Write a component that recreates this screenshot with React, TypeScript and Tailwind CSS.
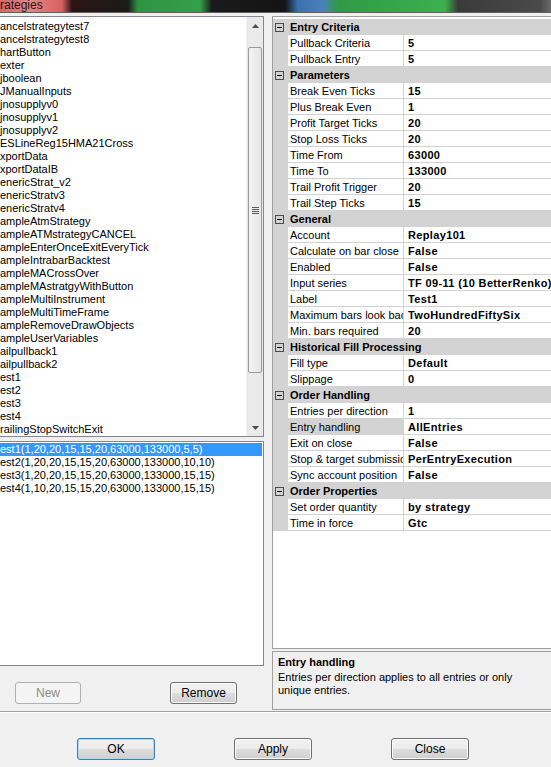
import React from "react";

const strategies = [
  "ancelstrategytest7",
  "ancelstrategytest8",
  "hartButton",
  "exter",
  "jboolean",
  "JManualInputs",
  "jnosupplyv0",
  "jnosupplyv1",
  "jnosupplyv2",
  "ESLineReg15HMA21Cross",
  "xportData",
  "xportDataIB",
  "enericStrat_v2",
  "enericStratv3",
  "enericStratv4",
  "ampleAtmStrategy",
  "ampleATMstrategyCANCEL",
  "ampleEnterOnceExitEveryTick",
  "ampleIntrabarBacktest",
  "ampleMACrossOver",
  "ampleMAstratgyWithButton",
  "ampleMultiInstrument",
  "ampleMultiTimeFrame",
  "ampleRemoveDrawObjects",
  "ampleUserVariables",
  "ailpullback1",
  "ailpullback2",
  "est1",
  "est2",
  "est3",
  "est4",
  "railingStopSwitchExit",
];

const tests = [
  "est1(1,20,20,15,15,20,63000,133000,5,5)",
  "est2(1,20,20,15,15,20,63000,133000,10,10)",
  "est3(1,20,20,15,15,20,63000,133000,15,15)",
  "est4(1,10,20,15,15,20,63000,133000,15,15)",
];

type Row = { cat?: string; name?: string; value?: string; sel?: boolean };

const grid: Row[] = [
  { cat: "Entry Criteria" },
  { name: "Pullback Criteria", value: "5" },
  { name: "Pullback Entry", value: "5" },
  { cat: "Parameters" },
  { name: "Break Even Ticks", value: "15" },
  { name: "Plus Break Even", value: "1" },
  { name: "Profit Target Ticks", value: "20" },
  { name: "Stop Loss Ticks", value: "20" },
  { name: "Time From", value: "63000" },
  { name: "Time To", value: "133000" },
  { name: "Trail Profit Trigger", value: "20" },
  { name: "Trail Step Ticks", value: "15" },
  { cat: "General" },
  { name: "Account", value: "Replay101" },
  { name: "Calculate on bar close", value: "False" },
  { name: "Enabled", value: "False" },
  { name: "Input series", value: "TF 09-11 (10 BetterRenko)" },
  { name: "Label", value: "Test1" },
  { name: "Maximum bars look back", value: "TwoHundredFiftySix" },
  { name: "Min. bars required", value: "20" },
  { cat: "Historical Fill Processing" },
  { name: "Fill type", value: "Default" },
  { name: "Slippage", value: "0" },
  { cat: "Order Handling" },
  { name: "Entries per direction", value: "1" },
  { name: "Entry handling", value: "AllEntries", sel: true },
  { name: "Exit on close", value: "False" },
  { name: "Stop & target submission", value: "PerEntryExecution" },
  { name: "Sync account position", value: "False" },
  { cat: "Order Properties" },
  { name: "Set order quantity", value: "by strategy" },
  { name: "Time in force", value: "Gtc" },
];

function Arrow({ up }: { up?: boolean }) {
  return (
    <svg width="7" height="4" viewBox="0 0 7 4">
      {up ? (
        <polygon points="0,4 7,4 3.5,0" fill="#4d4d4d" />
      ) : (
        <polygon points="0,0 7,0 3.5,4" fill="#4d4d4d" />
      )}
    </svg>
  );
}

function WinButton({
  label,
  disabled,
  primary,
  w,
}: {
  label: string;
  disabled?: boolean;
  primary?: boolean;
  w: string;
}) {
  if (disabled) {
    return (
      <div
        className={`${w} h-[22px] rounded-[3px] border border-[#adb2b5] bg-[#f4f4f4] text-[12px] text-[#8c8c8c] flex items-center justify-center`}
      >
        {label}
      </div>
    );
  }
  return (
    <div
      className={`${w} h-[22px] rounded-[3px] border ${
        primary ? "border-[#3c7fb1] shadow-[inset_0_0_0_1px_#a6dcfa]" : "border-[#707070] shadow-[inset_0_0_0_1px_#fbfbfb]"
      } bg-[linear-gradient(to_bottom,#f2f2f2_0%,#ebebeb_48%,#dddddd_52%,#cfcfcf_100%)] text-[12px] text-black flex items-center justify-center`}
    >
      {label}
    </div>
  );
}

export default function App() {
  return (
    <div className="w-[551px] h-[767px] overflow-hidden bg-[#f0f0f0] font-['Liberation_Sans',Arial,sans-serif] text-black select-none">
      {/* title strip */}
      <div className="h-[12px] bg-[linear-gradient(to_right,#d96464_0px,#e88484_30px,#d86060_62px,#2a1414_72px,#1a1a1a_128px,#2e9444_138px,#34a04a_200px,#1a1a1a_212px,#141414_285px,#3a72b0_298px,#4a80bc_322px,#2f9a46_338px,#3cb04e_445px,#3a3a3a_458px,#4a4a4a_540px,#6a6a6a_551px)] text-[12px] leading-[11px] text-[#1a1a1a] overflow-hidden whitespace-nowrap">
        rategies
      </div>
      <div className="h-[1px] bg-[#5e5e5e]" />

      {/* main area */}
      <div className="h-[698px] pt-[3px] flex">
        {/* left column */}
        <div className="w-[264px] shrink-0 flex flex-col">
          {/* strategies list */}
          <div className="h-[421px] border-t border-r border-b border-[#828790] bg-white flex">
            <div className="flex-1 pt-[3px] overflow-hidden">
              {strategies.map((s, i) => (
                <div key={i} className="h-[13px] text-[11px] leading-[13px] whitespace-nowrap">
                  {s}
                </div>
              ))}
            </div>
            <div className="w-[17px] bg-[#eaeaea] border-l border-[#f3f3f3] flex flex-col">
              <div className="h-[17px] flex items-center justify-center">
                <Arrow up />
              </div>
              <div className="h-[13px]" />
              <div className="h-[326px] mx-[1px] rounded-[2px] border border-[#9a9a9a] bg-[linear-gradient(to_right,#f3f3f3,#e6e6e6)] flex items-center justify-center">
                <div className="flex flex-col gap-[1px]">
                  <div className="w-[7px] h-[1px] bg-[#5a5a5a]" />
                  <div className="w-[7px] h-[1px] bg-[#5a5a5a]" />
                  <div className="w-[7px] h-[1px] bg-[#5a5a5a]" />
                  <div className="w-[7px] h-[1px] bg-[#5a5a5a]" />
                </div>
              </div>
              <div className="flex-1" />
              <div className="h-[17px] flex items-center justify-center">
                <Arrow />
              </div>
            </div>
          </div>

          {/* tests list */}
          <div className="mt-[4px] h-[225px] border-t border-r border-b border-[#828790] bg-white pt-[1px] pr-[1px] overflow-hidden">
            {tests.map((t, i) => (
              <div
                key={i}
                className={`h-[13px] text-[11px] leading-[13px] whitespace-nowrap ${
                  i === 0 ? "bg-[#3399ff] text-white" : "text-black"
                }`}
              >
                {t}
              </div>
            ))}
          </div>

          {/* New / Remove */}
          <div className="mt-[16px] flex">
            <div className="ml-[15px]">
              <WinButton label="New" disabled w="w-[66px]" />
            </div>
            <div className="ml-[89px]">
              <WinButton label="Remove" w="w-[67px]" />
            </div>
          </div>
        </div>

        {/* right column */}
        <div className="ml-[8px] w-[300px] shrink-0 flex flex-col">
          <div className="h-[633px] border border-[#a0a0a0] bg-white pt-[2px] overflow-hidden">
            {grid.map((r, i) =>
              r.cat ? (
                <div key={i} className="h-[16px] bg-[#d3d3d3] flex items-center">
                  <div className="ml-[2px] w-[9px] h-[9px] border border-[#4a4a4a] flex items-center justify-center">
                    <div className="w-[5px] h-[1px] bg-black" />
                  </div>
                  <div className="ml-[6px] text-[11px] font-bold leading-[16px] whitespace-nowrap">{r.cat}</div>
                </div>
              ) : (
                <div key={i} className="h-[16px] flex">
                  <div className="w-[15px] shrink-0 bg-[#d3d3d3]" />
                  <div
                    className={`w-[116px] shrink-0 border-b border-r border-[#d3d3d3] pl-[2px] text-[11px] leading-[16px] whitespace-nowrap overflow-hidden ${
                      r.sel ? "bg-[#d3d3d3]" : "bg-white"
                    }`}
                  >
                    {r.name}
                  </div>
                  <div className="flex-1 border-b border-[#d3d3d3] pl-[4px] text-[11px] font-bold tracking-[0.35px] leading-[16px] whitespace-nowrap overflow-hidden">
                    {r.value}
                  </div>
                </div>
              )
            )}
          </div>
          <div className="mt-[2px] h-[59px] border border-[#a0a0a0] bg-[#f0f0f0] pl-[5px] pt-[4px]">
            <div className="text-[11px] font-bold leading-[13px]">Entry handling</div>
            <div className="text-[11px] leading-[13px] mt-[2px] w-[250px]">
              Entries per direction applies to all entries or only unique entries.
            </div>
          </div>
        </div>
      </div>

      {/* separator */}
      <div className="h-[1px] bg-[#a0a0a0]" />
      <div className="h-[1px] bg-white" />

      {/* bottom buttons */}
      <div className="mt-[25px] flex">
        <div className="ml-[77px]">
          <WinButton label="OK" primary w="w-[78px]" />
        </div>
        <div className="ml-[79px]">
          <WinButton label="Apply" w="w-[78px]" />
        </div>
        <div className="ml-[79px]">
          <WinButton label="Close" w="w-[78px]" />
        </div>
      </div>
    </div>
  );
}
